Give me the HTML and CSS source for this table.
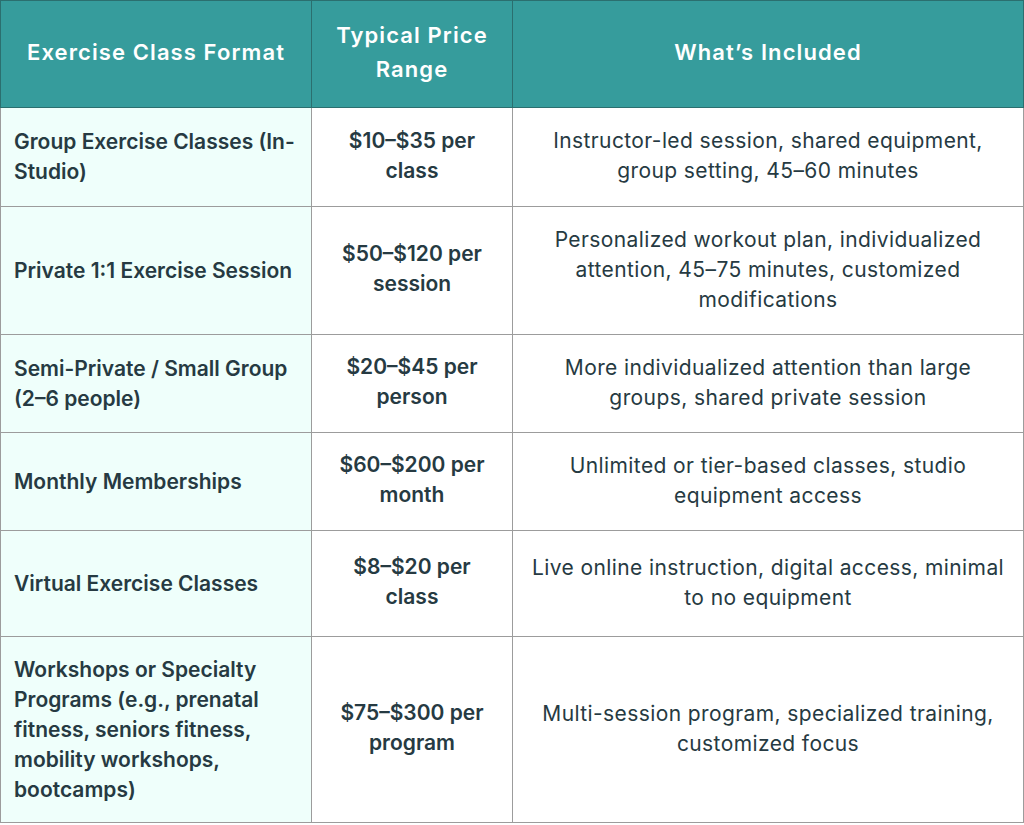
FILE: index.html
```html
<!DOCTYPE html>
<html>
<head>
<meta charset="utf-8">
<link rel="stylesheet" href="styles.css">
</head>
<body>
<table class="pricing">
  <colgroup>
    <col class="c1"><col class="c2"><col class="c3">
  </colgroup>
  <thead>
    <tr class="r-head">
      <th>Exercise Class Format</th>
      <th>Typical Price<br>Range</th>
      <th>What’s Included</th>
    </tr>
  </thead>
  <tbody>
    <tr class="r1">
      <td class="fmt">Group Exercise Classes (In-Studio)</td>
      <td class="price">$10–$35 per class</td>
      <td class="inc">Instructor-led session, shared equipment,<br>group setting, 45–60 minutes</td>
    </tr>
    <tr class="r2">
      <td class="fmt">Private 1:1 Exercise Session</td>
      <td class="price">$50–$120 per session</td>
      <td class="inc">Personalized workout plan, individualized attention, 45–75 minutes, customized modifications</td>
    </tr>
    <tr class="r3">
      <td class="fmt">Semi-Private / Small Group (2–6 people)</td>
      <td class="price">$20–$45 per person</td>
      <td class="inc">More individualized attention than large groups, shared private session</td>
    </tr>
    <tr class="r4">
      <td class="fmt">Monthly Memberships</td>
      <td class="price">$60–$200 per month</td>
      <td class="inc">Unlimited or tier-based classes, studio<br>equipment access</td>
    </tr>
    <tr class="r5">
      <td class="fmt">Virtual Exercise Classes</td>
      <td class="price">$8–$20 per class</td>
      <td class="inc">Live online instruction, digital access, minimal to no equipment</td>
    </tr>
    <tr class="r6">
      <td class="fmt">Workshops or Specialty Programs (e.g., prenatal fitness, seniors fitness, mobility workshops, bootcamps)</td>
      <td class="price">$75–$300 per program</td>
      <td class="inc">Multi-session program, specialized training, customized focus</td>
    </tr>
  </tbody>
</table>
</body>
</html>
```
FILE: styles.css
```css
html, body {
  margin: 0;
  padding: 0;
  background: #ffffff;
}
.pricing {
  width: 1023px;
  border-collapse: collapse;
  table-layout: fixed;
  font-family: "Inter", "Noto Sans", sans-serif;
  font-size: 21px;
  line-height: 30px;
  color: #263a42;
}
.c1 { width: 311px; }
.c2 { width: 201px; }
.c3 { width: 511px; }
.pricing th,
.pricing td {
  border: 1.5px solid #9c9c9c;
  vertical-align: middle;
}
.pricing th {
  background: #369c9c;
  color: #ffffff;
  font-weight: 600;
  font-size: 22px;
  letter-spacing: 1.1px;
  line-height: 34px;
  text-align: center;
  border-color: #2b6f6f;
  padding: 0 8px 4px;
}
.r-head { height: 107px; }
.r1 { height: 99px; }
.r2 { height: 128px; }
.r3 { height: 98px; }
.r4 { height: 98px; }
.r5 { height: 106px; }
.r6 { height: 186px; }
.fmt {
  background: #effffb;
  font-weight: 600;
  text-align: left;
  padding: 0 10px 0 13px;
}
.price {
  font-weight: 600;
  text-align: center;
  padding: 0 20px 3px;
}
.inc {
  font-weight: 400;
  letter-spacing: 0.4px;
  text-align: center;
  padding: 0 16px 2px;
}
```
